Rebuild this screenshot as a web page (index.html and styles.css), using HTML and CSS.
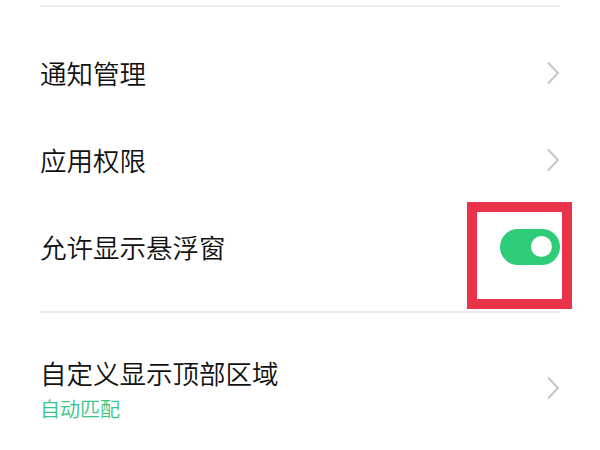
FILE: index.html
```html
<html>
	<head>
		<meta charset="utf-8">
		<title>应用设置</title>
		<link rel="stylesheet" href="styles.css">
	</head>
	<body>
		<div class="list">
			<div class="divider"></div>
			<div class="group">
				<div class="row">
					<span class="label">通知管理</span>
					<svg class="chevron" width="14" height="24" viewBox="0 0 14 24"><polyline points="2,1.5 12,12 2,22.5"/></svg>
				</div>
				<div class="row">
					<span class="label">应用权限</span>
					<svg class="chevron" width="14" height="24" viewBox="0 0 14 24"><polyline points="2,1.5 12,12 2,22.5"/></svg>
				</div>
				<div class="row">
					<span class="label">允许显示悬浮窗</span>
					<div class="switch-wrap">
						<div class="switch on"><div class="knob"></div></div>
						<div class="mark"></div>
					</div>
				</div>
			</div>
			<div class="divider"></div>
			<div class="row tall">
				<div>
					<div class="label">自定义显示顶部区域</div>
					<div class="sub">自动匹配</div>
				</div>
				<svg class="chevron" width="14" height="24" viewBox="0 0 14 24"><polyline points="2,1.5 12,12 2,22.5"/></svg>
			</div>
		</div>
	</body>
</html>
```

FILE: styles.css
```css
body {
	margin: 0;
	background: #fff;
	font-family: "Noto Sans CJK SC", "Noto Sans", sans-serif;
	font-weight: 350;
	color: #111;
	overflow: hidden;
}

.list {
	padding: 5px 40px 0 40px;
}

.divider {
	height: 2px;
	background: #ececec;
}

.group {
	padding: 22px 0 21px 0;
}

.row {
	height: 87px;
	display: flex;
	align-items: center;
	justify-content: space-between;
}

.row.tall {
	height: auto;
	padding-top: 42px;
}

.label {
	font-size: 26.5px;
	line-height: 36px;
}

.sub {
	font-size: 20px;
	line-height: 24px;
	margin-top: 6px;
	color: #37c486;
}

.chevron {
	margin-right: 0;
	fill: none;
	stroke: #c6c6c6;
	stroke-width: 2;
}

.switch-wrap {
	position: relative;
}

.switch {
	width: 60px;
	height: 36px;
	border-radius: 18px;
	background: #2ecb78;
	display: flex;
	align-items: center;
	justify-content: flex-end;
	padding-right: 8px;
	box-sizing: border-box;
}

.knob {
	width: 21px;
	height: 21px;
	border-radius: 50%;
	background: #fff;
}

.mark {
	position: absolute;
	left: -33px;
	right: -12px;
	top: -27px;
	bottom: -44px;
	border: 10px solid #e8334a;
}
```
